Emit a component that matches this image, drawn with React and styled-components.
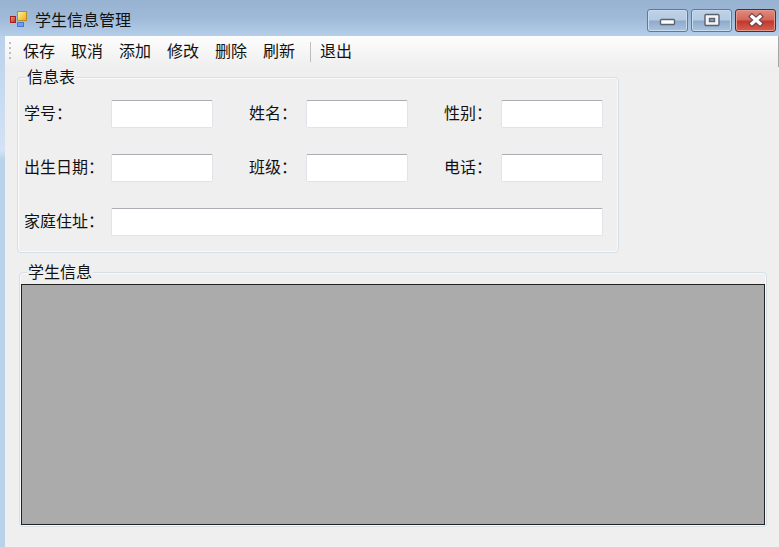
import React from "react";
import styled, { createGlobalStyle } from "styled-components";

const tools = ["保存", "取消", "添加", "修改", "删除", "刷新"];

const fields = [
  { id: "number", label: "学号：" },
  { id: "name", label: "姓名：" },
  { id: "gender", label: "性别：" },
  { id: "birthday", label: "出生日期：" },
  { id: "class", label: "班级：" },
  { id: "phone", label: "电话：" },
];

const FormIcon = () => (
  <svg width="18" height="18" viewBox="0 0 18 18" aria-hidden="true">
    <defs>
      <linearGradient id="gold" x1="0" y1="0" x2="1" y2="1">
        <stop offset="0" stopColor="#fff3a0" />
        <stop offset="1" stopColor="#e8ae14" />
      </linearGradient>
      <linearGradient id="red" x1="0" y1="0" x2="1" y2="1">
        <stop offset="0" stopColor="#f3988a" />
        <stop offset="1" stopColor="#c4261d" />
      </linearGradient>
    </defs>
    <rect x="0.5" y="5.5" width="5" height="6" fill="url(#red)" stroke="#a3211d" />
    <rect x="7.5" y="0.5" width="9" height="9" fill="url(#gold)" stroke="#b98a26" />
    <rect x="7.5" y="11.5" width="6" height="4" fill="#6c9df0" stroke="#4a76cf" />
  </svg>
);

const MinimizeIcon = () => (
  <svg width="20" height="14" viewBox="0 0 20 14" aria-hidden="true">
    <rect x="2.5" y="6.5" width="14" height="5" rx="1" fill="#fff" stroke="#5a6270" strokeWidth="1.4" />
  </svg>
);

const MaximizeIcon = () => (
  <svg width="20" height="14" viewBox="0 0 20 14" aria-hidden="true">
    <rect x="3" y="1.5" width="14" height="11" rx="1" fill="#f4f4f6" stroke="#5a6270" strokeWidth="1.4" />
    <rect x="7.5" y="5.5" width="5" height="3" fill="#8fa9c6" stroke="#5a6270" strokeWidth="1.4" />
  </svg>
);

const CloseIcon = () => (
  <svg width="20" height="14" viewBox="0 0 20 14" aria-hidden="true">
    <path d="M6 3.5L14 10.5M14 3.5L6 10.5" stroke="#6b4248" strokeWidth="5.4" strokeLinecap="square" />
    <path d="M6 3.5L14 10.5M14 3.5L6 10.5" stroke="#fff" strokeWidth="3.2" strokeLinecap="square" />
  </svg>
);

const App = () => {
  return (
    <>
      <GlobalStyle />
      <Window lang="zh-CN">
        <TitleBar>
          <FormIcon />
          <Title>学生信息管理</Title>
          <Controls>
            <ControlButton aria-label="最小化">
              <MinimizeIcon />
            </ControlButton>
            <ControlButton aria-label="最大化">
              <MaximizeIcon />
            </ControlButton>
            <ControlButton $danger aria-label="关闭">
              <CloseIcon />
            </ControlButton>
          </Controls>
        </TitleBar>
        <Client>
          <Toolbar>
            <Grip>
              <Dot />
              <Dot />
              <Dot />
              <Dot />
            </Grip>
            {tools.map((tool) => (
              <ToolButton key={tool}>{tool}</ToolButton>
            ))}
            <Separator />
            <ToolButton>退出</ToolButton>
          </Toolbar>
          <Content>
            <InfoGroup>
              <Legend>信息表</Legend>
              <Form>
                {fields.map((field) => (
                  <React.Fragment key={field.id}>
                    <Label htmlFor={field.id}>{field.label}</Label>
                    <TextBox id={field.id} type="text" />
                  </React.Fragment>
                ))}
                <Label htmlFor="address">家庭住址：</Label>
                <AddressBox id="address" type="text" />
              </Form>
            </InfoGroup>
            <StudentGroup>
              <Legend id="students">学生信息</Legend>
              <DataGrid aria-labelledby="students">
                <tbody />
              </DataGrid>
            </StudentGroup>
          </Content>
        </Client>
      </Window>
    </>
  );
};

const GlobalStyle = createGlobalStyle`
  * {
    box-sizing: border-box;
  }

  body {
    margin: 0;
  }

  body, button, input {
    font-family: "Noto Sans CJK SC", sans-serif;
    font-size: 16px;
    line-height: 20px;
    color: #111;
  }
`;

const Window = styled.div`
  display: flex;
  flex-direction: column;
  min-height: 100vh;
  padding-left: 5px;
  background: linear-gradient(#b3cce8, #d3e3f5 150px, #b9d1e9 160px, #b9d1e9);
`;

const TitleBar = styled.header`
  display: flex;
  align-items: center;
  height: 36px;
  margin-left: -5px;
  padding: 4px 3px 0 10px;
  background: linear-gradient(#98b3d2, #9fbad8 50%, #b5cee9);
`;

const Title = styled.h1`
  flex: 1;
  margin: 0 0 0 7px;
  padding-bottom: 2px;
  font-size: 16px;
  font-weight: 400;
`;

const Controls = styled.div`
  display: flex;
  gap: 3px;
`;

const ControlButton = styled.button`
  display: flex;
  align-items: center;
  justify-content: center;
  width: 41px;
  height: 23px;
  padding: 0;
  border: 1px solid ${(props) => (props.$danger ? "#5b2730" : "#64788f")};
  border-radius: 3px;
  box-shadow: inset 0 0 0 1px ${(props) => (props.$danger ? "#e39a8e" : "#c9dbee")};
  background: ${(props) =>
    props.$danger
      ? "linear-gradient(#e08c7d, #d4655a 48%, #c0382a 52%, #d8604e)"
      : "linear-gradient(#bed1e6, #b4cbe3 48%, #8fabca 52%, #a9c3df)"};
`;

const Client = styled.div`
  display: flex;
  flex: 1;
  flex-direction: column;
  background: #efefef;
`;

const Toolbar = styled.div`
  display: flex;
  align-items: center;
  height: 31px;
  padding-left: 4px;
  border-right: 1px solid #a5a5a5;
  background: linear-gradient(#fdfdfd, #efefef);
`;

const Grip = styled.div`
  display: flex;
  flex-direction: column;
  gap: 3px;
  margin-right: 4px;
  padding-bottom: 2px;
`;

const Dot = styled.span`
  width: 2px;
  height: 2px;
  background: #bdbdbd;
`;

const ToolButton = styled.button`
  padding: 0 8px 3px;
  border: 0;
  background: none;
  white-space: nowrap;
`;

const Separator = styled.div`
  width: 1px;
  height: 20px;
  margin-left: 7px;
  margin-right: 1px;
  background: #bdbdbd;
`;

const Content = styled.main`
  display: flex;
  flex: 1;
  flex-direction: column;
  gap: 9px;
  padding: 0 12px 20px;
`;

const GroupBox = styled.fieldset`
  min-width: 0;
  margin: 0;
  border: 1px solid #d5dfe5;
  border-radius: 4px;
  box-shadow: inset 0 0 0 1px #f9f9f9;
`;

const InfoGroup = styled(GroupBox)`
  max-width: 602px;
  padding: 13px 15px 16px 6px;
`;

const StudentGroup = styled(GroupBox)`
  margin-left: 2px;
  padding: 2px 1px 1px;
`;

const Legend = styled.legend`
  margin-left: 2px;
  padding: 0 1px 2px;
  line-height: 18px;
  background: #efefef;

  ${StudentGroup} & {
    margin-left: 6px;
  }
`;

const Form = styled.div`
  display: grid;
  grid-template-columns: 87px 1fr 93px 1fr 93px 1fr;
  row-gap: 26px;
  align-items: center;
`;

const Label = styled.label`
  padding-bottom: 4px;
  white-space: nowrap;

  &:nth-of-type(3n + 2),
  &:nth-of-type(3n) {
    padding-left: 36px;
  }
`;

const TextBox = styled.input`
  width: 100%;
  min-width: 0;
  height: 28px;
  padding: 2px 4px;
  border: 1px solid #e2e3ea;
  border-top-color: #abadb3;
  border-radius: 2px;
  background: #fff;
`;

const AddressBox = styled(TextBox)`
  grid-column: 2 / -1;
`;

/* fills whatever the title bar, toolbar and form leave free */
const DataGrid = styled.table`
  display: block;
  height: calc(100vh - 306px);
  min-height: 160px;
  border: 1px solid #222;
  background: #ababab;
`;

export default App;
